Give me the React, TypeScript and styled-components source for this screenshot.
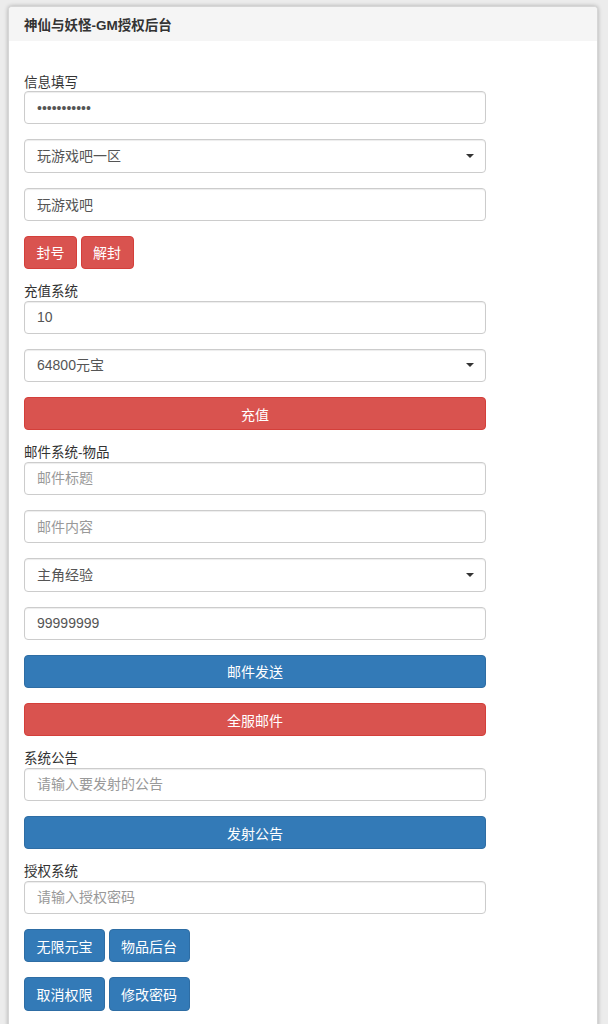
import React from "react";
import styled, { createGlobalStyle } from "styled-components";

const GlobalStyle = createGlobalStyle`
  html, body {
    margin: 0;
    padding: 0;
    background: #ececec;
  }
  body {
    font-family: "Liberation Sans", "Noto Sans CJK SC", sans-serif;
    color: #333;
  }
  * { box-sizing: border-box; }
`;

const Panel = styled.div`
  margin: 6px 10px 0 8px;
  background: #fff;
  border: 1px solid #d6d6d6;
  border-radius: 4px;
  box-shadow: 0 0 4px rgba(0, 0, 0, 0.28);
  overflow: hidden;
`;

const PanelHeading = styled.div`
  height: 34px;
  display: flex;
  align-items: center;
  padding: 0 15px;
  background: #f5f5f5;
  font-size: 13.5px;
  font-weight: bold;
  color: #333;
`;

const PanelBody = styled.div`
  padding: 33.5px 15px 20px;
`;

const Form = styled.form`
  width: 462px;
  display: flex;
  flex-direction: column;
`;

const FieldLabel = styled.label`
  display: block;
  font-size: 13.5px;
  line-height: 16.5px;
  color: #333;
`;

const TextInput = styled.input`
  display: block;
  width: 100%;
  height: 33.25px;
  margin: 0 0 15px;
  padding: 0 12px;
  font-family: inherit;
  font-size: 14px;
  color: #555;
  background: #fff;
  border: 1px solid #ccc;
  border-radius: 4px;
  box-shadow: inset 0 1px 1px rgba(0, 0, 0, 0.075);
  outline: none;
  &::placeholder {
    color: #999;
  }
`;

const SelectWrap = styled.div`
  position: relative;
  margin: 0 0 15px;
`;

const Select = styled.select`
  display: block;
  width: 100%;
  height: 33.25px;
  padding: 0 12px;
  font-family: inherit;
  font-size: 14px;
  color: #555;
  background: #fff;
  border: 1px solid #ccc;
  border-radius: 4px;
  box-shadow: inset 0 1px 1px rgba(0, 0, 0, 0.075);
  appearance: none;
  -webkit-appearance: none;
  outline: none;
`;

const Caret = styled.span`
  position: absolute;
  right: 12px;
  top: 50%;
  margin-top: -2px;
  width: 0;
  height: 0;
  border-top: 4px solid #333;
  border-left: 4px solid transparent;
  border-right: 4px solid transparent;
  pointer-events: none;
`;

const ButtonRow = styled.div`
  display: flex;
  gap: 3.5px;
  margin: 0 0 15px;
`;

const Button = styled.button<{ $variant: "danger" | "primary"; $block?: boolean }>`
  display: flex;
  align-items: center;
  justify-content: center;
  height: 33.25px;
  width: ${(p) => (p.$block ? "100%" : "auto")};
  margin: ${(p) => (p.$block ? "0 0 15px" : "0")};
  padding: 0 11.5px;
  font-family: inherit;
  font-size: 14px;
  color: #fff;
  border-radius: 4px;
  cursor: pointer;
  background: ${(p) => (p.$variant === "danger" ? "#d9534f" : "#337ab7")};
  border: 1px solid ${(p) => (p.$variant === "danger" ? "#d43f3a" : "#2e6da4")};
`;

function SelectField({ value, options }: { value: string; options: string[] }) {
  return (
    <SelectWrap>
      <Select defaultValue={value}>
        {options.map((o) => (
          <option key={o} value={o}>
            {o}
          </option>
        ))}
      </Select>
      <Caret />
    </SelectWrap>
  );
}

export default function App() {
  return (
    <>
      <GlobalStyle />
      <Panel>
        <PanelHeading>神仙与妖怪-GM授权后台</PanelHeading>
        <PanelBody>
          <Form onSubmit={(e) => e.preventDefault()}>
            <FieldLabel>信息填写</FieldLabel>
            <TextInput type="password" defaultValue="12345678901" readOnly />
            <SelectField value="玩游戏吧一区" options={["玩游戏吧一区", "玩游戏吧二区"]} />
            <TextInput type="text" defaultValue="玩游戏吧" readOnly />
            <ButtonRow>
              <Button type="button" $variant="danger">封号</Button>
              <Button type="button" $variant="danger">解封</Button>
            </ButtonRow>

            <FieldLabel>充值系统</FieldLabel>
            <TextInput type="text" defaultValue="10" readOnly />
            <SelectField value="64800元宝" options={["64800元宝", "32800元宝"]} />
            <Button type="button" $variant="danger" $block>充值</Button>

            <FieldLabel>邮件系统-物品</FieldLabel>
            <TextInput type="text" placeholder="邮件标题" />
            <TextInput type="text" placeholder="邮件内容" />
            <SelectField value="主角经验" options={["主角经验", "元宝"]} />
            <TextInput type="text" defaultValue="99999999" readOnly />
            <Button type="button" $variant="primary" $block>邮件发送</Button>
            <Button type="button" $variant="danger" $block>全服邮件</Button>

            <FieldLabel>系统公告</FieldLabel>
            <TextInput type="text" placeholder="请输入要发射的公告" />
            <Button type="button" $variant="primary" $block>发射公告</Button>

            <FieldLabel>授权系统</FieldLabel>
            <TextInput type="password" placeholder="请输入授权密码" />
            <ButtonRow>
              <Button type="button" $variant="primary">无限元宝</Button>
              <Button type="button" $variant="primary">物品后台</Button>
            </ButtonRow>
            <ButtonRow>
              <Button type="button" $variant="primary">取消权限</Button>
              <Button type="button" $variant="primary">修改密码</Button>
            </ButtonRow>
          </Form>
        </PanelBody>
      </Panel>
    </>
  );
}
